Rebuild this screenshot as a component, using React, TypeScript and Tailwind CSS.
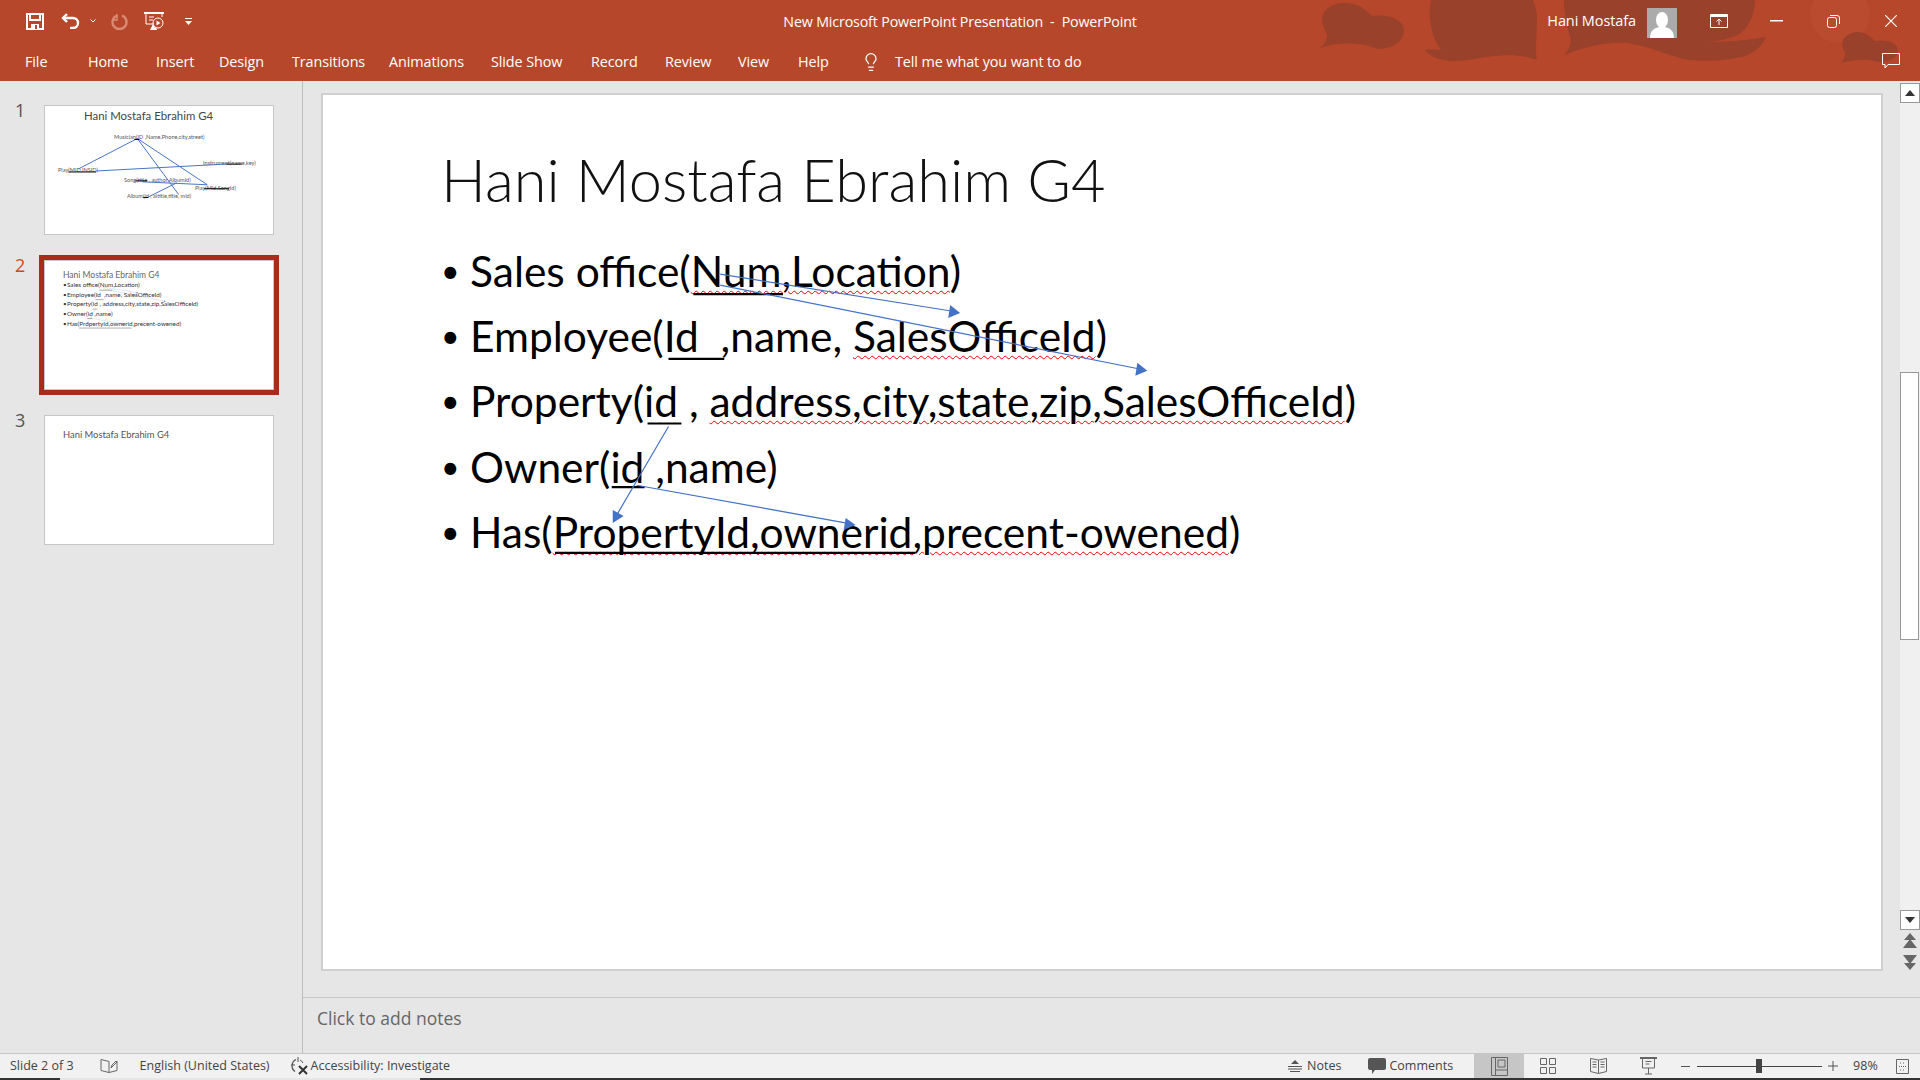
import { Lightbulb } from 'lucide-react';

const tabs = [
  { label: 'File', width: 'w-[63px]' },
  { label: 'Home', width: 'w-[68px]' },
  { label: 'Insert', width: 'w-[63px]' },
  { label: 'Design', width: 'w-[73px]' },
  { label: 'Transitions', width: 'w-[97px]' },
  { label: 'Animations', width: 'w-[102px]' },
  { label: 'Slide Show', width: 'w-[100px]' },
  { label: 'Record', width: 'w-[74px]' },
  { label: 'Review', width: 'w-[73px]' },
  { label: 'View', width: 'w-[60px]' },
  { label: 'Help', width: 'w-[61px]' },
];

const uiFont = "font-['Open_Sans',sans-serif]";
const slideFont = "font-['Lato',sans-serif]";

function RibbonArt() {
  return (
    <svg className="absolute left-0 top-0 h-[81px] w-[1920px]" viewBox="0 0 1920 81">
      <ellipse cx="1840" cy="15" rx="30" ry="28" fill="#bb4b2e" />
      <g fill="#9a412b">
        <path d="M1320 48C1328 40 1328 36 1325 30C1316 12 1330 3 1345 3C1360 3 1368 12 1372 16C1385 14 1404 18 1404 30C1404 42 1392 49 1378 49C1360 42 1340 42 1320 48Z" />
        <path d="M1431 0C1428 15 1430 35 1441 50C1432 49 1427 49 1425 50C1430 58 1445 62 1460 61C1485 58 1510 50 1537 60C1535 50 1537 35 1537 20C1537 10 1535 5 1533 0Z" />
        <path d="M1564 55C1570 48 1572 43 1570 37C1566 25 1564 12 1564 0L1755 0C1755 10 1752 18 1749 23C1744 32 1738 36 1729 38C1722 41 1712 42 1704 42C1725 42 1750 40 1766 37C1762 48 1750 56 1737 58C1720 61 1705 61 1688 60C1668 56 1650 46 1627 43C1610 42 1590 45 1564 55Z" />
        <path d="M1841 63C1845 58 1846 55 1844 50C1838 40 1848 32 1858 32C1866 32 1871 38 1875 41C1885 39 1898 42 1898 50C1898 58 1888 63 1878 62C1865 58 1852 60 1841 63Z" />
      </g>
    </svg>
  );
}

function QuickAccess() {
  return (
    <div className="relative flex w-[400px] items-center pl-[26px]">
      <svg width="18" height="17" viewBox="0 0 18 17" fill="none" stroke="#fff" strokeWidth="2">
        <path d="M1 1h16v15H1z" />
        <path d="M4 1v6h10V1" />
        <path fill="#fff" stroke="none" d="M5 11h8v5H5z" />
        <path fill="#b7472a" stroke="none" d="M9 12h2v4H9z" />
      </svg>
      <svg className="ml-[17px]" width="20" height="16" viewBox="0 0 20 16" fill="none" stroke="#fff" strokeWidth="2.4">
        <path d="M2 5h10a5 5 0 0 1 0 10H9" />
        <path d="M6 1 2 5l4 4" />
      </svg>
      <svg className="ml-[9px]" width="6" height="4" viewBox="0 0 6 4" fill="none" stroke="#fff">
        <path d="M0.5 0.5 3 3l2.5-2.5" />
      </svg>
      <svg className="ml-[15px]" width="17" height="17" viewBox="0 0 17 17" fill="none" stroke="#d98a75" strokeWidth="2.4">
        <path d="M6 2.500A7 7 0 1 0 11 2.500" />
        <path d="M6 1v6H2" strokeWidth="1.500" />
      </svg>
      <svg className="ml-[16px]" width="20" height="19" viewBox="0 0 20 19" fill="none" stroke="#fff">
        <path strokeWidth="2" d="M0 1h20" />
        <path d="M2 1v11h8" />
        <path d="M18 1v4" />
        <path d="M5 5h5M5 8h4" />
        <circle cx="14" cy="11" r="5" />
        <path fill="#fff" stroke="none" d="m12.500 8.500 4 2.500-4 2.500z" />
        <path fill="#fff" stroke="none" d="m9 12 2 4 1-1 1 3H6z" />
      </svg>
      <svg className="ml-[21px]" width="7" height="7" viewBox="0 0 7 7" fill="#fff">
        <path d="M0 0h7v1H0z" />
        <path d="M0 3h7L3.500 7z" />
      </svg>
    </div>
  );
}

function WindowControls() {
  return (
    <div className="relative flex w-[400px] items-center justify-end pr-[23px]">
      <span className={`text-[14.500px] tracking-[-0.1px] text-white ${uiFont}`}>Hani Mostafa</span>
      <div className="ml-[11px] mt-[4px] flex h-[30px] w-[30px] items-end justify-center overflow-hidden bg-[#ababab]">
        <svg width="26" height="27" viewBox="0 0 26 27" fill="#fff">
          <ellipse cx="13" cy="9" rx="6" ry="8" />
          <path d="M1 27c0-8 5-10 9-11h6c4 1 9 3 9 11z" />
        </svg>
      </div>
      <svg className="ml-[33px]" width="18" height="14" viewBox="0 0 18 14" fill="none" stroke="#fff">
        <path d="M.5.5h17v13H.5z" />
        <path strokeWidth="2" d="M1 2h16" />
        <path d="M9 11V5M6.500 7.500 9 5l2.500 2.500" />
      </svg>
      <svg className="ml-[42px]" width="13" height="2" viewBox="0 0 13 2" fill="#fff">
        <path d="M0 0h13v1.500H0z" />
      </svg>
      <svg className="ml-[44px]" width="13" height="13" viewBox="0 0 13 13" fill="none" stroke="#fff">
        <rect x=".5" y="2.500" width="9" height="10" rx="2" />
        <path d="M3 .5h7a2.500 2.500 0 0 1 2.500 2.500v6" />
      </svg>
      <svg className="ml-[45px]" width="12" height="12" viewBox="0 0 12 12" fill="none" stroke="#fff" strokeWidth="1.200">
        <path d="m0 0 12 12M12 0 0 12" />
      </svg>
    </div>
  );
}

function Header() {
  return (
    <header className="relative h-[81px] shrink-0 bg-[#b7472a] text-white">
      <RibbonArt />
      <div className="flex h-[40px] pt-[2px]">
        <QuickAccess />
        <div className={`relative flex-1 pt-[9px] text-center text-[14.250px] tracking-[-0.15px] ${uiFont}`}>
          New Microsoft PowerPoint Presentation&nbsp; -&nbsp; PowerPoint
        </div>
        <WindowControls />
      </div>
      <div className={`relative flex h-[41px] items-center pl-[25px] pt-[2px] text-[14.400px] tracking-[-0.1px] ${uiFont}`}>
        {tabs.map((tab) => (
          <div key={tab.label} className={tab.width}>
            {tab.label}
          </div>
        ))}
        <Lightbulb className="ml-[2px] h-[20px] w-[20px]" strokeWidth={1.5} />
        <span className="ml-[14px]">Tell me what you want to do</span>
        <svg className="absolute left-[1882px] top-[13px]" width="18" height="16" viewBox="0 0 18 16" fill="none" stroke="#fff">
          <path d="M.5.5h17v11H6l-3 3.500v-3.500H.5z" />
        </svg>
      </div>
    </header>
  );
}

// Connectors and hand drawn underlines, in full size screen coordinates so both the slide and its thumbnail can share them
function SlideMarks() {
  return (
    <svg className="absolute inset-0 h-full w-full" viewBox="321 93 1561 878">
      <g stroke="#000" strokeWidth="2.200">
        <path d="M691 293h90" />
        <path d="M666 358h56" />
        <path d="M645 423h34" />
        <path d="M609 487h33" />
        <path d="M552 553h362" />
      </g>
      <g stroke="#4472c4" strokeWidth="1.200">
        <path d="M718 273 950 310" />
        <path d="M718 284 1138 368" />
        <path d="M666 426 614 515" />
        <path d="M634 485 845 523" />
      </g>
      <g fill="#4472c4">
        <path d="m959 312-12 5 2-13z" />
        <path d="m1147 370-12 5 2-13z" />
        <path d="m610 523 0-13 11 6z" />
        <path d="m854 525-12 5 2-12z" />
      </g>
    </svg>
  );
}

function SlideLines({ big }: { big: boolean }) {
  const wavy = big ? 'underline decoration-wavy decoration-[#f00000] decoration-1 underline-offset-[3px]' : '';
  const rows = [
    <>Sales office(<span className={wavy}>Num,Location</span>)</>,
    <>Employee(Id&nbsp;&nbsp;,name, <span className={wavy}>SalesOfficeId</span>)</>,
    <>Property(id , <span className={wavy}>address,city,state,zip,SalesOfficeId</span>)</>,
    <>Owner(id ,name)</>,
    <>Has(<span className={wavy}>PropertyId,ownerid,precent-owened</span>)</>,
  ];
  return (
    <ul className={big ? 'mt-[20px] flex flex-col' : '-mt-[1px] flex flex-col'}>
      {rows.map((row, i) => (
        <li key={i} className={big ? 'flex h-[65.300px] items-center' : 'flex h-[9.600px] items-center'}>
          <span className={big ? 'w-[29px] text-[32px]' : 'w-[4px]'}>•</span>
          <span>{row}</span>
        </li>
      ))}
    </ul>
  );
}

function Thumb({ n, active, children }: { n: number; active?: boolean; children: React.ReactNode }) {
  return (
    <div className="flex">
      <div className={`w-[39px] pl-[15px] text-[18px] leading-[20px] ${uiFont} ${active ? 'text-[#d24726]' : 'text-[#555]'}`}>{n}</div>
      <div className={`h-[140px] w-[240px] border-[5px] ${active ? 'border-[#a92b1a]' : 'border-transparent'}`}>
        <div className="relative h-[130px] w-[230px] overflow-hidden border border-[#c6c6c6] bg-white">{children}</div>
      </div>
    </div>
  );
}

const diagramLabels = [
  { text: 'Musician(ID ,Name,Phone,city,street)', pos: 'left-[69px] top-[27px]' },
  { text: 'Play(MID,INSID)', pos: 'left-[13px] top-[60px]' },
  { text: 'Instrument(name,key)', pos: 'left-[158px] top-[53px]' },
  { text: 'Song(title , author,AlbumId)', pos: 'left-[79px] top-[70px]' },
  { text: 'Play(Mid,SongId)', pos: 'left-[150px] top-[78px]' },
  { text: 'Album(id , aititle,title, mId)', pos: 'left-[82px] top-[86px]' },
];

function DiagramThumb() {
  return (
    <>
      <div className={`pl-[39px] pt-[3px] text-[11.400px] leading-[14px] text-[#444] ${slideFont}`}>Hani Mostafa Ebrahim G4</div>
      {diagramLabels.map((label) => (
        <span key={label.text} className={`absolute whitespace-nowrap text-[5.600px] leading-[8px] text-[#555] ${label.pos} ${slideFont}`}>
          {label.text}
        </span>
      ))}
      <svg className="absolute inset-0 h-full w-full" viewBox="44 105 230 130">
        <g stroke="#4472c4" fill="none">
          <path d="M137 138 77 169" />
          <path d="M137 138 179 195" />
          <path d="M137 138 208 185" />
          <path d="M95 171 227 164" />
          <path d="M142 182 208 185" />
          <path d="M177 183 147 198" />
        </g>
        <g stroke="#000">
          <path d="M134 139h5" />
          <path d="M67 172h28" />
          <path d="M227 164h16" />
          <path d="M135 181h12" />
          <path d="M205 189h25" />
          <path d="M143 198h5" />
        </g>
      </svg>
    </>
  );
}

function Sidebar() {
  return (
    <aside className="flex w-[303px] shrink-0 flex-col gap-[15px] border-r border-[#bcbcbc] pt-[19px]">
      <Thumb n={1}>
        <DiagramThumb />
      </Thumb>
      <Thumb n={2} active>
        <div className={`pl-[18px] pt-[9px] text-[6.300px] leading-[9px] text-[#333] ${slideFont}`}>
          <div className="text-[8.500px] leading-[11px] text-[#666]">Hani Mostafa Ebrahim G4</div>
          <SlideLines big={false} />
        </div>
        <SlideMarks />
      </Thumb>
      <Thumb n={3}>
        <div className={`pl-[18px] pt-[13px] text-[9.400px] leading-[11px] text-[#555] ${slideFont}`}>Hani Mostafa Ebrahim G4</div>
      </Thumb>
    </aside>
  );
}

function Scrollbar() {
  return (
    <div className="flex w-[20px] shrink-0 flex-col items-center pb-[27px] pt-[2px]">
      <div className="flex h-[20px] w-[20px] items-center justify-center border border-[#999] bg-white">
        <svg width="10" height="6" viewBox="0 0 10 6" fill="#333"><path d="M5 0l5 6H0z" /></svg>
      </div>
      <div className="flex w-[20px] flex-1 flex-col bg-[#f0f0f0]">
        <div className="mt-[269px] h-[268px] w-[19px] border border-[#999] bg-white" />
      </div>
      <div className="flex h-[20px] w-[20px] items-center justify-center border border-[#999] bg-white">
        <svg width="10" height="6" viewBox="0 0 10 6" fill="#333"><path d="M5 6 10 0H0z" /></svg>
      </div>
      <svg className="mt-[3px]" width="14" height="16" viewBox="0 0 14 16" fill="#666">
        <path d="M7 0l6 7H1z" />
        <path d="M7 6l7 9H0z" />
      </svg>
      <svg className="mt-[5px]" width="14" height="16" viewBox="0 0 14 16" fill="#666">
        <path d="M0 1h14L7 10z" />
        <path d="M1 9h12l-6 7z" />
      </svg>
    </div>
  );
}

function Slide() {
  return (
    <div className={`relative mt-[12px] h-[878px] flex-1 border-2 border-[#cfcfcf] bg-white pl-[118px] text-black ${slideFont}`}>
      <div className="pt-[46px] text-[59.500px] font-light leading-[76px] text-[#111]">Hani Mostafa Ebrahim G4</div>
      <div className="pt-[1px] text-[42.500px] leading-[48px]">
        <SlideLines big />
      </div>
      <SlideMarks />
    </div>
  );
}

function StatusBar() {
  return (
    <footer className={`h-[27px] shrink-0 border-t border-[#c6c6c6] bg-[#f1f1f1] text-[12.500px] text-[#444] ${uiFont}`}>
      <div className="flex h-[24px] items-center">
        <span className="ml-[10px]">Slide 2 of 3</span>
        <svg className="ml-[26px]" width="18" height="14" viewBox="0 0 18 14" fill="none" stroke="#666">
          <path d="M9 2.500 1 .5v11l8 2 8-2V2" />
          <path d="M9 2.500v11" />
          <path d="m11 9 1-3 4-4 1 1-4 4z" />
        </svg>
        <span className="ml-[22px]">English (United States)</span>
        <svg className="ml-[20px]" width="20" height="18" viewBox="0 0 20 18" fill="none" stroke="#555">
          <path strokeWidth="1.300" d="M6 2.500a7 7 0 0 0-1 12" />
          <path d="M8 0v5M1 8h4M10 3a6 6 0 0 1 3 3" />
          <path stroke="#333" strokeWidth="2" d="m9 9 8 8m0-8-8 8" />
        </svg>
        <span className="ml-[1px]">Accessibility: Investigate</span>
        <svg className="ml-[838px]" width="14" height="12" viewBox="0 0 14 12" fill="#555">
          <path d="M7 0l4 4H3z" />
          <path d="M0 6h14v1H0zM0 8.500h14v1H0zM2 11h10v1H2z" />
        </svg>
        <span className="ml-[5px]">Notes</span>
        <svg className="ml-[27px]" width="18" height="16" viewBox="0 0 18 16" fill="#555">
          <path d="M2 0h14a2 2 0 0 1 2 2v8a2 2 0 0 1-2 2H7l-3 4v-4H2a2 2 0 0 1-2-2V2a2 2 0 0 1 2-2z" />
        </svg>
        <span className="ml-[3px]">Comments</span>
        <div className="ml-[21px] flex h-full w-[50px] items-center justify-center bg-[#c6c6c6]">
          <svg width="17" height="19" viewBox="0 0 17 19" fill="none" stroke="#666">
            <path d="M.5.5h16v18H.5z" />
            <path d="M4.500.5v18M4.500 13h12M7 3h7v7H7z" />
          </svg>
        </div>
        <svg className="ml-[16px]" width="16" height="16" viewBox="0 0 16 16" fill="none" stroke="#666">
          <path d="M.5.5h6v6h-6zM9.500.5h6v6h-6zM.5 9.500h6v6h-6zM9.500 9.500h6v6h-6z" />
        </svg>
        <svg className="ml-[34px]" width="17" height="16" viewBox="0 0 17 16" fill="none" stroke="#666">
          <path d="M.5.5l8 1.500 8-1.500v13l-8 2-8-2zM8.500 2v13" />
          <path d="M2.500 4h4M2.500 6.500h4M2.500 9h4M10.500 4h4M10.500 6.500h4M10.500 9h4" />
        </svg>
        <svg className="ml-[33px]" width="17" height="18" viewBox="0 0 17 18" fill="none" stroke="#666">
          <path strokeWidth="2" d="M0 1h17" />
          <path d="M2.500 1v10h12V1M8.500 11v6M5 17h7M5.500 4.500h6M5.500 7h4" />
        </svg>
        <svg className="ml-[24px]" width="9" height="1" viewBox="0 0 9 1" fill="#555"><path d="M0 0h9v1H0z" /></svg>
        <div className="relative ml-[7px] flex h-[14px] w-[125px] items-center">
          <div className="h-px w-full bg-[#444]" />
          <div className="absolute left-[59px] top-0 h-[14px] w-[6px] bg-[#444]" />
        </div>
        <svg className="ml-[6px]" width="10" height="10" viewBox="0 0 10 10" fill="#555"><path d="M0 4.500h10v1H0zM4.500 0h1v10h-1z" /></svg>
        <span className="ml-[15px]">98%</span>
        <svg className="ml-[18px]" width="13" height="15" viewBox="0 0 13 15" fill="none" stroke="#666">
          <path d="M.5.5h12v14H.5z" />
          <path d="M4 4h2M7 4h2M4 11h2M7 11h2M3 7.500h7" strokeDasharray="1 1" />
        </svg>
      </div>
      <div className="flex h-[2px]">
        <div className="w-[60px] bg-[#333]" />
        <div className="w-[360px] bg-[#e6e6e6]" />
        <div className="flex-1 bg-[#333]" />
      </div>
    </footer>
  );
}

export default function App() {
  return (
    <div className="flex h-[1080px] w-[1920px] flex-col overflow-hidden bg-[#e6e6e6]">
      <Header />
      <div className="flex min-h-0 flex-1">
        <Sidebar />
        <main className="flex min-w-0 flex-1 flex-col">
          <div className="flex h-[916px] pl-[18px]">
            <Slide />
            <div className="w-[17px] shrink-0" />
            <Scrollbar />
          </div>
          <div className={`h-[56px] border-t border-[#c6c6c6] pl-[14px] pt-[8px] text-[17.500px] leading-[24px] text-[#666] ${uiFont}`}>Click to add notes</div>
        </main>
      </div>
      <StatusBar />
    </div>
  );
}
